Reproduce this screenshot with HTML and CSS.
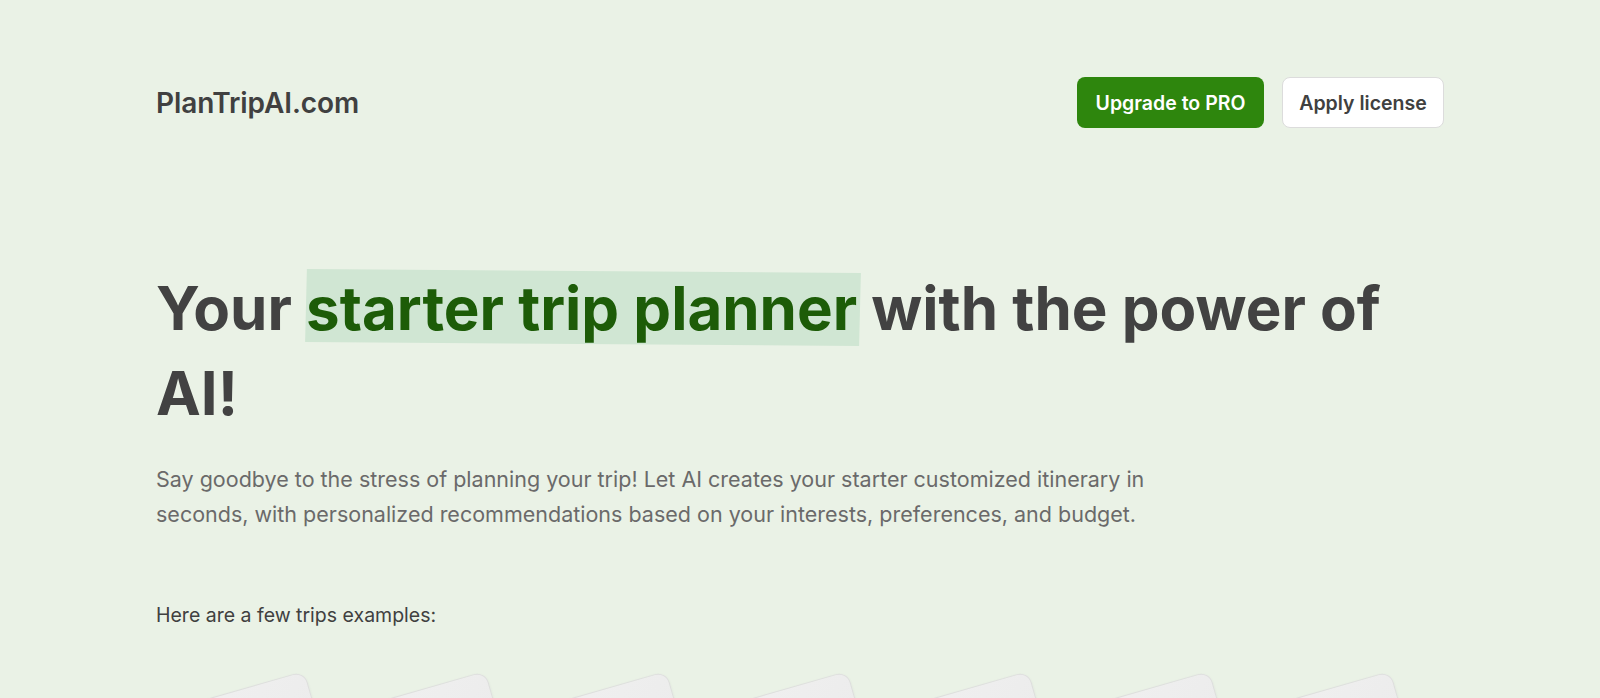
FILE: index.html
```html
<!DOCTYPE html>
<html lang="en">
<head>
<meta charset="utf-8">
<title>PlanTripAI.com</title>
<link rel="stylesheet" href="styles.css">
</head>
<body>
<div class="page">
  <header class="top">
    <div class="logo">PlanTripAI.com</div>
    <nav class="actions">
      <a class="btn btn-primary" href="#">Upgrade to PRO</a>
      <a class="btn btn-light" href="#">Apply license</a>
    </nav>
  </header>
  <main class="hero">
    <h1 class="title">Your <span class="hl">starter trip planner</span> with the power of AI!</h1>
    <p class="lead">Say goodbye to the stress of planning your trip! Let AI creates your starter customized itinerary in seconds, with personalized recommendations based on your interests, preferences, and budget.</p>
    <p class="examples">Here are a few trips examples:</p>
    <div class="cards">
      <div class="card"></div>
      <div class="card"></div>
      <div class="card"></div>
      <div class="card"></div>
      <div class="card"></div>
      <div class="card"></div>
      <div class="card"></div>
    </div>
  </main>
</div>
</body>
</html>
```
FILE: styles.css
```css
html, body {
  margin: 0;
  padding: 0;
}
body {
  background: #eaf2e6;
  font-family: Inter, "Noto Sans", sans-serif;
  color: #444444;
  height: 698px;
  overflow: hidden;
}
.page {
  width: 1288px;
  margin: 0 auto;
}
.top {
  display: flex;
  justify-content: space-between;
  align-items: center;
  padding-top: 77px;
}
.logo {
  font-size: 28px;
  font-weight: 600;
  color: #404040;
  letter-spacing: -0.1px;
}
.actions {
  display: flex;
  gap: 18px;
}
.btn {
  display: flex;
  align-items: center;
  justify-content: center;
  height: 51px;
  box-sizing: border-box;
  border-radius: 8px;
  font-size: 19.5px;
  font-weight: 600;
  text-decoration: none;
}
.btn-primary {
  width: 187px;
  background: #2e860d;
  color: #ffffff;
}
.btn-light {
  width: 162px;
  background: #ffffff;
  color: #404040;
  border: 1px solid #dcdcdc;
}
.hero {
  padding-top: 138px;
}
.title {
  margin: 0;
  font-size: 60px;
  line-height: 85px;
  font-weight: 700;
  color: #424242;
}
.hl {
  position: relative;
  color: #1d5c08;
  z-index: 0;
}
.hl::before {
  content: "";
  position: absolute;
  left: 0;
  right: -3px;
  top: -1px;
  bottom: 0;
  background: #d0e6d3;
  transform: rotate(0.4deg) skewX(-1deg);
  z-index: -1;
}
.lead {
  margin: 26px 0 0;
  max-width: 1040px;
  font-size: 21.5px;
  line-height: 35px;
  color: #6a6a6a;
}
.examples {
  margin: 69px 0 0;
  font-size: 19.5px;
  line-height: 28px;
  color: #404040;
}
.cards {
  display: flex;
  gap: 21px;
  padding-left: 19px;
  margin-top: 60px;
}
.card {
  flex: none;
  width: 160px;
  height: 200px;
  box-sizing: border-box;
  border-radius: 12px;
  border: 1px solid #dedede;
  background: linear-gradient(135deg, #f1f1f1, #e8e8e8);
  transform: rotate(-16deg);
  box-shadow: 0 1px 3px rgba(0,0,0,0.05);
}
```
